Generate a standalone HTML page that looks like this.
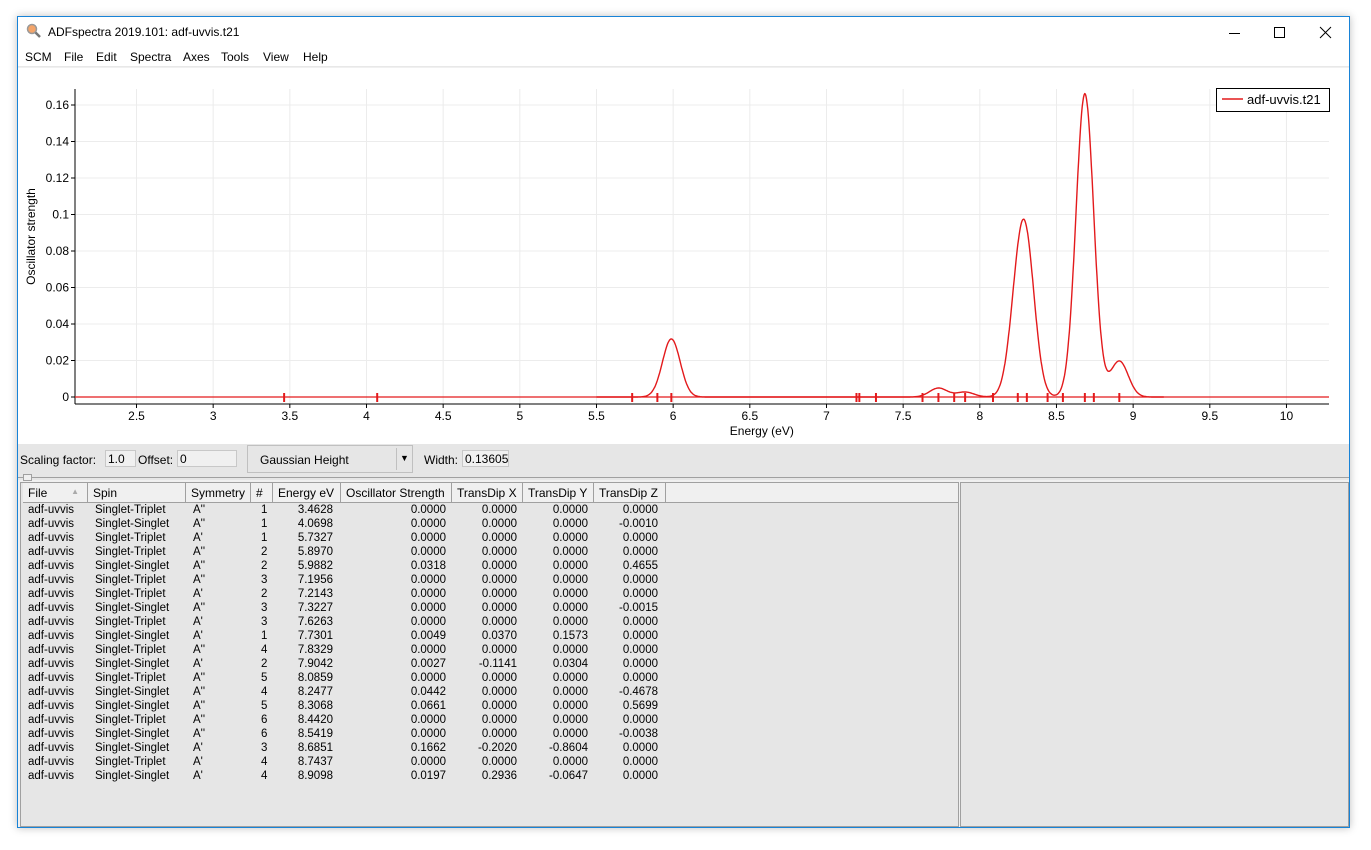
<!DOCTYPE html>
<html><head><meta charset="utf-8"><style>
*{box-sizing:border-box;margin:0;padding:0}
body{width:1371px;height:850px;background:#fff;position:relative;overflow:hidden;font-family:"Liberation Sans",Tahoma,sans-serif;font-size:12px;color:#000}
.win{position:absolute;left:17px;top:16px;width:1333px;height:812px;border:1px solid #1883d7;background:#f0f0f0;box-shadow:0 0 8px rgba(0,0,0,.25)}
.title{position:absolute;left:0;top:0;width:100%;height:30px;background:#fff}
.title span{position:absolute;left:30px;top:8px;font-size:12px}
.menu{position:absolute;left:0;top:30px;width:100%;height:20px;background:#fff;border-bottom:1px solid #e8e8e8}
.menu span{position:absolute;top:3px;font-size:12px}
.plot{position:absolute;left:0;top:51px;width:1331px;height:376px;background:#fff}
.ctrl{position:absolute;left:0;top:427px;width:1331px;height:36px;background:#e6e6e6;font-size:12px}
.ctrl .l{position:absolute;top:9px}
.inp{position:absolute;top:6px;height:17px;border:1px solid #c8c8c8;background:#f0f0f0;padding:1px 2px;font-size:12px}
.tbl{position:absolute;left:2px;top:465px;width:939px;height:345px;background:#e6e6e6;border:1px solid #a0a0a0}
.hdr{position:absolute;top:0;height:20px;background:#f0f0f0;border-right:1px solid #a0a0a0;border-bottom:1px solid #a0a0a0;padding:3px 5px;font-size:12px;white-space:nowrap}
.row{position:absolute;left:0;height:14px;font-size:11.5px;white-space:nowrap}
.row span{position:absolute;top:0}
.r{text-align:right}
.side{position:absolute;left:942px;top:465px;width:389px;height:345px;background:#e6e6e6;border:1px solid #a0a0a0}
</style></head><body>
<div class="win">
 <div class="title">
  <svg style="position:absolute;left:8px;top:6px" width="16" height="16" viewBox="0 0 16 16"><circle cx="6" cy="6" r="4.5" fill="#f4a56a" stroke="#999" stroke-width="1.5"/><line x1="9.5" y1="9.5" x2="14" y2="14" stroke="#777" stroke-width="2.5"/></svg>
  <span>ADFspectra 2019.101: adf-uvvis.t21</span>
  <svg style="position:absolute;left:1210px;top:9px" width="14" height="14"><line x1="1" y1="7.5" x2="12" y2="7.5" stroke="#000"/></svg>
  <svg style="position:absolute;left:1255px;top:9px" width="14" height="14"><rect x="1.5" y="1.5" width="10" height="10" fill="none" stroke="#000"/></svg>
  <svg style="position:absolute;left:1301px;top:9px" width="14" height="14"><path d="M1 1L12 12M12 1L1 12" stroke="#000"/></svg>
 </div>
 <div class="menu">
  <span style="left:7px">SCM</span><span style="left:46px">File</span><span style="left:78px">Edit</span><span style="left:112px">Spectra</span><span style="left:165px">Axes</span><span style="left:203px">Tools</span><span style="left:245px">View</span><span style="left:285px">Help</span>
 </div>
 <div class="plot"><svg id="sv" width="1331" height="376" style="position:absolute;left:0;top:0;font-family:'Liberation Sans',sans-serif"></svg></div>
 <div class="ctrl">
  <span class="l" style="left:2px">Scaling factor:</span><div class="inp" style="left:87px;width:31px">1.0</div>
  <span class="l" style="left:120px">Offset:</span><div class="inp" style="left:159px;width:60px">0</div>
  <div style="position:absolute;left:229px;top:1px;width:166px;height:28px;border:1px solid #c0c0c0;background:#e6e6e6"><span style="position:absolute;left:12px;top:7px">Gaussian Height</span><div style="position:absolute;left:148px;top:2px;height:22px;border-left:1px solid #c0c0c0;width:1px"></div><span style="position:absolute;left:152px;top:7px;font-size:9px">▼</span></div>
  <span class="l" style="left:406px">Width:</span><div class="inp" style="left:444px;width:47px;overflow:hidden">0.13605</div>
  <div style="position:absolute;left:0;top:33px;width:1331px;height:1px;background:#a0a0a0"></div>
  <div style="position:absolute;left:5px;top:30px;width:9px;height:7px;border:1px solid #a0a0a0;background:#f0f0f0"></div>
 </div>
 <div class="tbl" id="tbl"></div>
 <div class="side"></div>
</div>
<script>
var data=[["Singlet-Triplet","A''",1,3.4628,0,0,0,0],["Singlet-Singlet","A''",1,4.0698,0,0,0,-0.0010],["Singlet-Triplet","A'",1,5.7327,0,0,0,0],["Singlet-Triplet","A''",2,5.8970,0,0,0,0],["Singlet-Singlet","A''",2,5.9882,0.0318,0,0,0.4655],["Singlet-Triplet","A''",3,7.1956,0,0,0,0],["Singlet-Triplet","A'",2,7.2143,0,0,0,0],["Singlet-Singlet","A''",3,7.3227,0,0,0,-0.0015],["Singlet-Triplet","A'",3,7.6263,0,0,0,0],["Singlet-Singlet","A'",1,7.7301,0.0049,0.0370,0.1573,0],["Singlet-Triplet","A''",4,7.8329,0,0,0,0],["Singlet-Singlet","A'",2,7.9042,0.0027,-0.1141,0.0304,0],["Singlet-Triplet","A''",5,8.0859,0,0,0,0],["Singlet-Singlet","A''",4,8.2477,0.0442,0,0,-0.4678],["Singlet-Singlet","A''",5,8.3068,0.0661,0,0,0.5699],["Singlet-Triplet","A''",6,8.4420,0,0,0,0],["Singlet-Singlet","A''",6,8.5419,0,0,0,-0.0038],["Singlet-Singlet","A'",3,8.6851,0.1662,-0.2020,-0.8604,0],["Singlet-Triplet","A'",4,8.7437,0,0,0,0],["Singlet-Singlet","A'",4,8.9098,0.0197,0.2936,-0.0647,0]];
var ox=17,oy=67;
function X(e){return 135.5+(e-2.5)*153.33-ox}
function Y(v){return 396-v*1825-oy}
var s='';
var L=74-ox,R=1328-ox,T=88-oy,B=403-oy;
for(var e=2.5;e<=10.01;e+=0.5){s+='<line x1="'+X(e)+'" y1="'+T+'" x2="'+X(e)+'" y2="'+B+'" stroke="#ececec"/>';}
for(var v=0;v<=0.161;v+=0.02){s+='<line x1="'+L+'" y1="'+Y(v)+'" x2="'+R+'" y2="'+Y(v)+'" stroke="#ececec"/>';}
s+='<line x1="'+L+'" y1="'+T+'" x2="'+L+'" y2="'+B+'" stroke="#000"/><line x1="'+L+'" y1="'+B+'" x2="'+R+'" y2="'+B+'" stroke="#000"/>';
var lab=["2.5","3","3.5","4","4.5","5","5.5","6","6.5","7","7.5","8","8.5","9","9.5","10"];
for(var i=0;i<lab.length;i++){var e=2.5+i*0.5;s+='<line x1="'+X(e)+'" y1="'+B+'" x2="'+X(e)+'" y2="'+(B+4)+'" stroke="#000"/><text x="'+X(e)+'" y="'+(B+16)+'" font-size="12" text-anchor="middle">'+lab[i]+'</text>';}
var yl=["0","0.02","0.04","0.06","0.08","0.1","0.12","0.14","0.16"];
for(var i=0;i<yl.length;i++){var y=Y(i*0.02);s+='<line x1="'+(L-4)+'" y1="'+y+'" x2="'+L+'" y2="'+y+'" stroke="#000"/><text x="'+(L-6)+'" y="'+(y+4)+'" font-size="12" text-anchor="end">'+yl[i]+'</text>';}
s+='<text x="'+(X(6.5)+12)+'" y="'+(B+31)+'" font-size="12" text-anchor="middle">Energy (eV)</text>';
s+='<text transform="translate('+(17)+','+((T+B)/2-10)+') rotate(-90)" font-size="12" text-anchor="middle">Oscillator strength</text>';
s+='<line x1="'+L+'" y1="'+Y(0)+'" x2="'+R+'" y2="'+Y(0)+'" stroke="#e31a1c" stroke-width="1.3"/>';
var sg=0.13605/2.3548,p='';
for(var e=5.5;e<=9.2;e+=0.004){var f=0;for(var k=0;k<data.length;k++){var d=e-data[k][3];f+=data[k][4]*Math.exp(-d*d/(2*sg*sg));}p+=(p?'L':'M')+X(e).toFixed(1)+' '+Y(f).toFixed(1);}
s+='<path d="'+p+'" fill="none" stroke="#e31a1c" stroke-width="1.4"/>';
for(var k=0;k<data.length;k++){var x=X(data[k][3]);s+='<line x1="'+x+'" y1="'+(Y(0)-4)+'" x2="'+x+'" y2="'+(Y(0)+5)+'" stroke="#e31a1c" stroke-width="2"/>';}
s+='<rect x="'+(1215.5-ox)+'" y="'+(87.5-oy)+'" width="113" height="23" fill="#fff" stroke="#000"/><line x1="'+(1221-ox)+'" y1="'+(98-oy)+'" x2="'+(1242-ox)+'" y2="'+(98-oy)+'" stroke="#e31a1c" stroke-width="1.5"/><text x="'+(1246-ox)+'" y="'+(103-oy)+'" font-size="13">adf-uvvis.t21</text>';
document.getElementById('sv').innerHTML=s;
var cols=[["File",2,65],["Spin",67,98],["Symmetry",165,65],["#",230,22],["Energy eV",252,68],["Oscillator Strength",320,111],["TransDip X",431,71],["TransDip Y",502,71],["TransDip Z",573,72]];
var h='';
for(var i=0;i<cols.length;i++)h+='<div class="hdr" style="left:'+cols[i][1]+'px;width:'+cols[i][2]+'px">'+cols[i][0]+(i==0?'<span style="position:absolute;right:8px;top:4px;font-size:8px;color:#aaa">▲</span>':'')+'</div>';
h+='<div class="hdr" style="left:645px;width:292px;border-right:none"></div>';
function f4(v){return v.toFixed(4)}
for(var r=0;r<data.length;r++){var d=data[r],t=21+r*14;
h+='<div class="row" style="top:'+t+'px"><span style="left:7px">adf-uvvis</span><span style="left:74px">'+d[0]+'</span><span style="left:172px">'+d[1]+'</span><span style="left:240px">'+d[2]+'</span><span class="r" style="left:252px;width:60px">'+f4(d[3])+'</span><span class="r" style="left:320px;width:105px">'+f4(d[4])+'</span><span class="r" style="left:431px;width:65px">'+f4(d[5])+'</span><span class="r" style="left:502px;width:65px">'+f4(d[6])+'</span><span class="r" style="left:573px;width:64px">'+f4(d[7])+'</span></div>';}
document.getElementById('tbl').innerHTML=h;
</script>
</body></html>
